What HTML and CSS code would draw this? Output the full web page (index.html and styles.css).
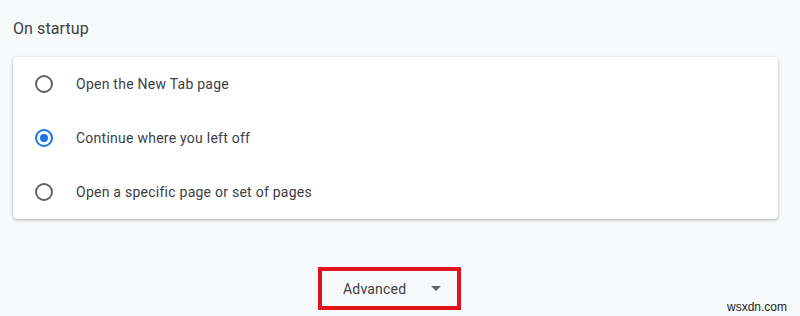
FILE: index.html
```html
<!DOCTYPE html>
<html lang="en">

<head>
    <meta charset="UTF-8">
    <meta name="viewport" content="width=device-width, initial-scale=1.0">
    <title>On startup</title>
    <link rel="stylesheet" href="styles.css">
</head>

<body>
    <div class="page">

        <!-- section title -->
        <h2 class="section-title">On startup</h2>

        <!-- startup options -->
        <div class="card">
            <label class="option">
                <span class="radio"></span>
                <span class="option-text">Open the New Tab page</span>
            </label>
            <label class="option">
                <span class="radio checked"></span>
                <span class="option-text">Continue where you left off</span>
            </label>
            <label class="option">
                <span class="radio"></span>
                <span class="option-text">Open a specific page or set of pages</span>
            </label>
        </div>

        <!-- advanced toggle -->
        <div class="advanced-row">
            <div class="advanced-box">
                <span class="advanced-text">Advanced</span>
                <span class="arrow"></span>
            </div>
        </div>

        <div class="watermark">wsxdn.com</div>
    </div>
</body>

</html>
```

FILE: styles.css
```css
body {
    margin: 0;
    background: #f8f9fa;
    font-family: Roboto, 'Liberation Sans', sans-serif;
    height: 316px;
    overflow: hidden;
}

.page {
    padding: 0 22px 0 13px;
    position: relative;
    height: 316px;
}

.section-title {
    margin: 0;
    padding-top: 18px;
    height: 40px;
    box-sizing: border-box;
    font-size: 16px;
    font-weight: 400;
    color: #3c4043;
    line-height: 22px;
    letter-spacing: 0.1px;
}

.card {
    background: #fff;
    border-radius: 4px;
    box-shadow: 0 1px 2px rgba(60, 64, 67, 0.25), 0 1px 3px 1px rgba(60, 64, 67, 0.12);
    height: 162px;
    margin-top: 17px;
    display: flex;
    flex-direction: column;
    justify-content: center;
}

.option {
    display: flex;
    align-items: center;
    height: 54px;
    padding-left: 22px;
}

.radio {
    width: 18px;
    height: 18px;
    box-sizing: border-box;
    border: 2px solid #5f6368;
    border-radius: 50%;
    position: relative;
    flex-shrink: 0;
}

.radio.checked {
    border-color: #1a73e8;
}

.radio.checked::after {
    content: "";
    position: absolute;
    top: 3px;
    left: 3px;
    width: 8px;
    height: 8px;
    border-radius: 50%;
    background: #1a73e8;
}

.option-text {
    margin-left: 23px;
    font-size: 14px;
    color: #3c4043;
    letter-spacing: 0.25px;
}

.advanced-row {
    display: flex;
    padding-left: 305px;
    margin-top: 48px;
}

.advanced-box {
    width: 143px;
    height: 43px;
    box-sizing: border-box;
    border: 4px solid #e0141e;
    display: flex;
    align-items: center;
    padding-left: 21px;
}

.advanced-text {
    font-size: 14px;
    color: #3c4043;
    letter-spacing: 0.2px;
}

.arrow {
    margin-left: 25px;
    width: 0;
    height: 0;
    border-left: 5px solid transparent;
    border-right: 5px solid transparent;
    border-top: 5px solid #5f6368;
}

.watermark {
    position: absolute;
    right: 13px;
    bottom: 2px;
    font-family: 'Liberation Sans', Arial, sans-serif;
    font-size: 12px;
    color: #222;
}
```
